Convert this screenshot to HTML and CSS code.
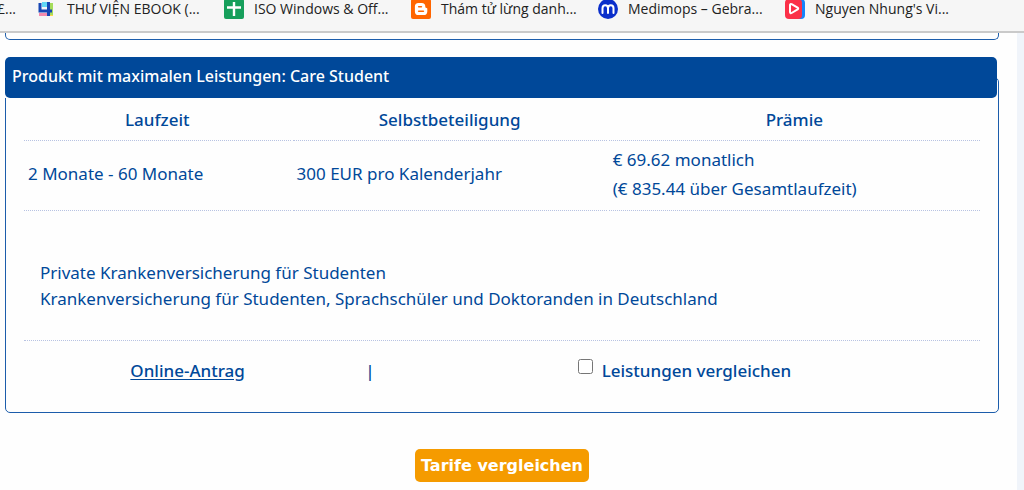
FILE: index.html
```html
<!DOCTYPE html>
<html lang="de">
<head>
<meta charset="utf-8">
<meta name="viewport" content="width=device-width, initial-scale=1">
<title>Produkt mit maximalen Leistungen: Care Student</title>
<link rel="stylesheet" href="styles.css">
</head>
<body>
<nav class="bookmarks" aria-label="Lesezeichen">
  <a class="bookmark bookmark-cut" href="#">£...</a>
  <a class="bookmark" href="#">
    <svg class="icon" viewBox="0 0 20 20" aria-hidden="true"><path fill="#62d8f5" d="M5 3h5v5H5z"/><path fill="#ffd84a" d="M12 14h4v3h-4z"/><path fill="#a5dc5b" d="M13 4h3v12h-3z"/><path fill="#f48aae" d="M2 14h8v3H2z"/><path fill="none" stroke="#1746b4" stroke-width="3" d="M3 4v8h12M11.500 3v14"/></svg>
    <span>THƯ VIỆN EBOOK (...</span></a>
  <a class="bookmark" href="#">
    <svg class="icon" viewBox="0 0 20 20" aria-hidden="true"><rect width="20" height="20" rx="2" fill="#169f5b"/><path stroke="#fff" stroke-width="2.400" d="M10 3v14M3 8.500h14"/></svg>
    <span>ISO Windows &amp; Off...</span></a>
  <a class="bookmark" href="#">
    <svg class="icon" viewBox="0 0 20 20" aria-hidden="true"><rect width="20" height="20" rx="2" fill="#ff6500"/><path fill="#fff" d="M7.500 4h3.200a3.600 3.600 0 0 1 3.600 3.600c0 1 .3 1.300 1.200 1.300.6 0 .8.300.8.900v2.600a3.700 3.700 0 0 1-3.700 3.600H7.500A3.600 3.600 0 0 1 3.900 12.400V7.600A3.600 3.600 0 0 1 7.500 4z"/><path stroke="#ff6500" stroke-width="1.600" stroke-linecap="round" d="M7.700 7.800h2.700M7.700 12.200h4.700"/></svg>
    <span>Thám tử lừng danh...</span></a>
  <a class="bookmark" href="#">
    <svg class="icon" viewBox="0 0 20 20" aria-hidden="true"><circle cx="10" cy="10" r="10" fill="#0b2fcb"/><path fill="none" stroke="#fff" stroke-width="2" stroke-linecap="round" d="M4.500 14V9.200c0-4 5.500-4 5.500 0V14M10 9.200c0-4 5.500-4 5.500 0V14"/></svg>
    <span>Medimops – Gebra...</span></a>
  <a class="bookmark" href="#">
    <svg class="icon" viewBox="0 0 20 20" aria-hidden="true"><rect x="4" width="16" height="20" rx="4" fill="#1683fa"/><rect width="17" height="20" rx="4" fill="#fb3048"/><path fill="none" stroke="#fff" stroke-width="2" stroke-linejoin="round" d="M5 6c0-1 .7-1.300 1.600-.9l6 3.600c.8.500.8 1.200 0 1.700l-6 3.600c-.9.500-1.600 0-1.600-.9z"/></svg>
    <span>Nguyen Nhung's Vi...</span></a>
</nav>
<main class="page">
  <div class="previous"></div>
  <form class="compare">
    <fieldset class="product">
      <legend class="product-title">Produkt mit maximalen Leistungen: Care Student</legend>
      <table class="tariff">
        <colgroup><col class="col-term"><col class="col-excess"><col class="col-premium"></colgroup>
        <thead>
          <tr><th>Laufzeit</th><th>Selbstbeteiligung</th><th>Prämie</th></tr>
        </thead>
        <tbody>
          <tr><td>2 Monate - 60 Monate</td><td>300 EUR pro Kalenderjahr</td><td class="premium">€ 69.62 monatlich<br>(€ 835.44 über Gesamtlaufzeit)</td></tr>
          <tr><td class="description" colspan="3">Private Krankenversicherung für Studenten<br>Krankenversicherung für Studenten, Sprachschüler und Doktoranden in Deutschland</td></tr>
        </tbody>
      </table>
      <div class="actions">
        <div class="apply"><a class="apply-link" href="#">Online-Antrag</a></div>
        <div class="divider">|</div>
        <div class="choice"><input class="check" type="checkbox" id="care-student"><label for="care-student">Leistungen vergleichen</label></div>
      </div>
    </fieldset>
    <button class="submit" type="button">Tarife vergleichen</button>
  </form>
</main>
</body>
</html>
```
FILE: styles.css
```css
* { box-sizing: border-box; }

body {
  margin: 0;
  min-height: 100vh;
  display: flex;
  flex-direction: column;
  background: #f0f4fa;
  color: #004899;
  font: 17px/26px "Noto Sans", sans-serif;
}

.bookmarks {
  display: flex;
  height: 33px;
  overflow: hidden;
  background: #f6f6f6;
  border-bottom: 2px solid #cacaca;
  font: 14px/18px "Open Sans", "Noto Sans", sans-serif;
}

.bookmark {
  display: flex;
  flex: 0 0 187px;
  align-items: center;
  gap: 10px;
  height: 18px;
  color: #222;
  text-decoration: none;
  white-space: nowrap;
}

.bookmark-cut {
  flex-basis: 37px;
  min-width: 0;
  justify-content: flex-end;
  padding-right: 21px;
}

.icon {
  flex: none;
  width: 20px;
  height: 20px;
}

.page {
  flex: 1;
  margin-right: 7px;
  padding: 0 18px 8px 5px;
  background: #fefefe;
}

.previous {
  height: 7px;
  margin-bottom: 17px;
  border: 1px solid #1c5dab;
  border-top: 0;
  border-radius: 0 0 5px 5px;
}

.compare {
  display: flex;
  flex-direction: column;
  align-items: center;
}

.product {
  width: 100%;
  min-width: 0;
  margin: 0 0 36px;
  padding: 0 16px 28px;
  border: 1px solid #1c5dab;
  border-radius: 5px;
}

.product-title {
  width: calc(100% + 32px);
  margin: 0 -17px;
  padding: 6px 7px 9px;
  border-radius: 5px;
  background: #004899;
  color: #fff;
  font-size: 16px;
  font-weight: 500;
}

.tariff {
  width: 100%;
  table-layout: fixed;
  border-spacing: 2px 0;
}

.col-term { width: 28%; }
.col-excess { width: 33%; }
.col-premium { width: 39%; }

.tariff th,
.tariff td {
  padding: 6px 4px 10px;
  border-bottom: 1px dotted #b8c3e2;
  text-align: left;
  font-weight: 400;
}

.tariff th {
  padding: 9px 0 7px;
  text-align: center;
  font-weight: 500;
}

.tariff .premium {
  padding: 4px 4px 7px;
  line-height: 29px;
}

.tariff .description {
  padding: 49px 16px 28px;
}

.actions {
  display: grid;
  grid-template-columns: 69fr 7fr 124fr;
  align-items: center;
  padding-top: 17px;
  font-weight: 500;
  text-align: center;
}

.apply-link {
  color: inherit;
  text-underline-offset: 2px;
}

.choice {
  display: flex;
  justify-content: center;
  align-items: flex-start;
  gap: 9px;
}

.check {
  width: 15px;
  height: 15px;
  margin: 1px 0 0;
}

.submit {
  padding: 6px 6px 5px;
  border: 0;
  border-radius: 5px;
  background: #f59b00;
  color: #fff;
  font: bold 16px/22px "DejaVu Sans", sans-serif;
}
```
